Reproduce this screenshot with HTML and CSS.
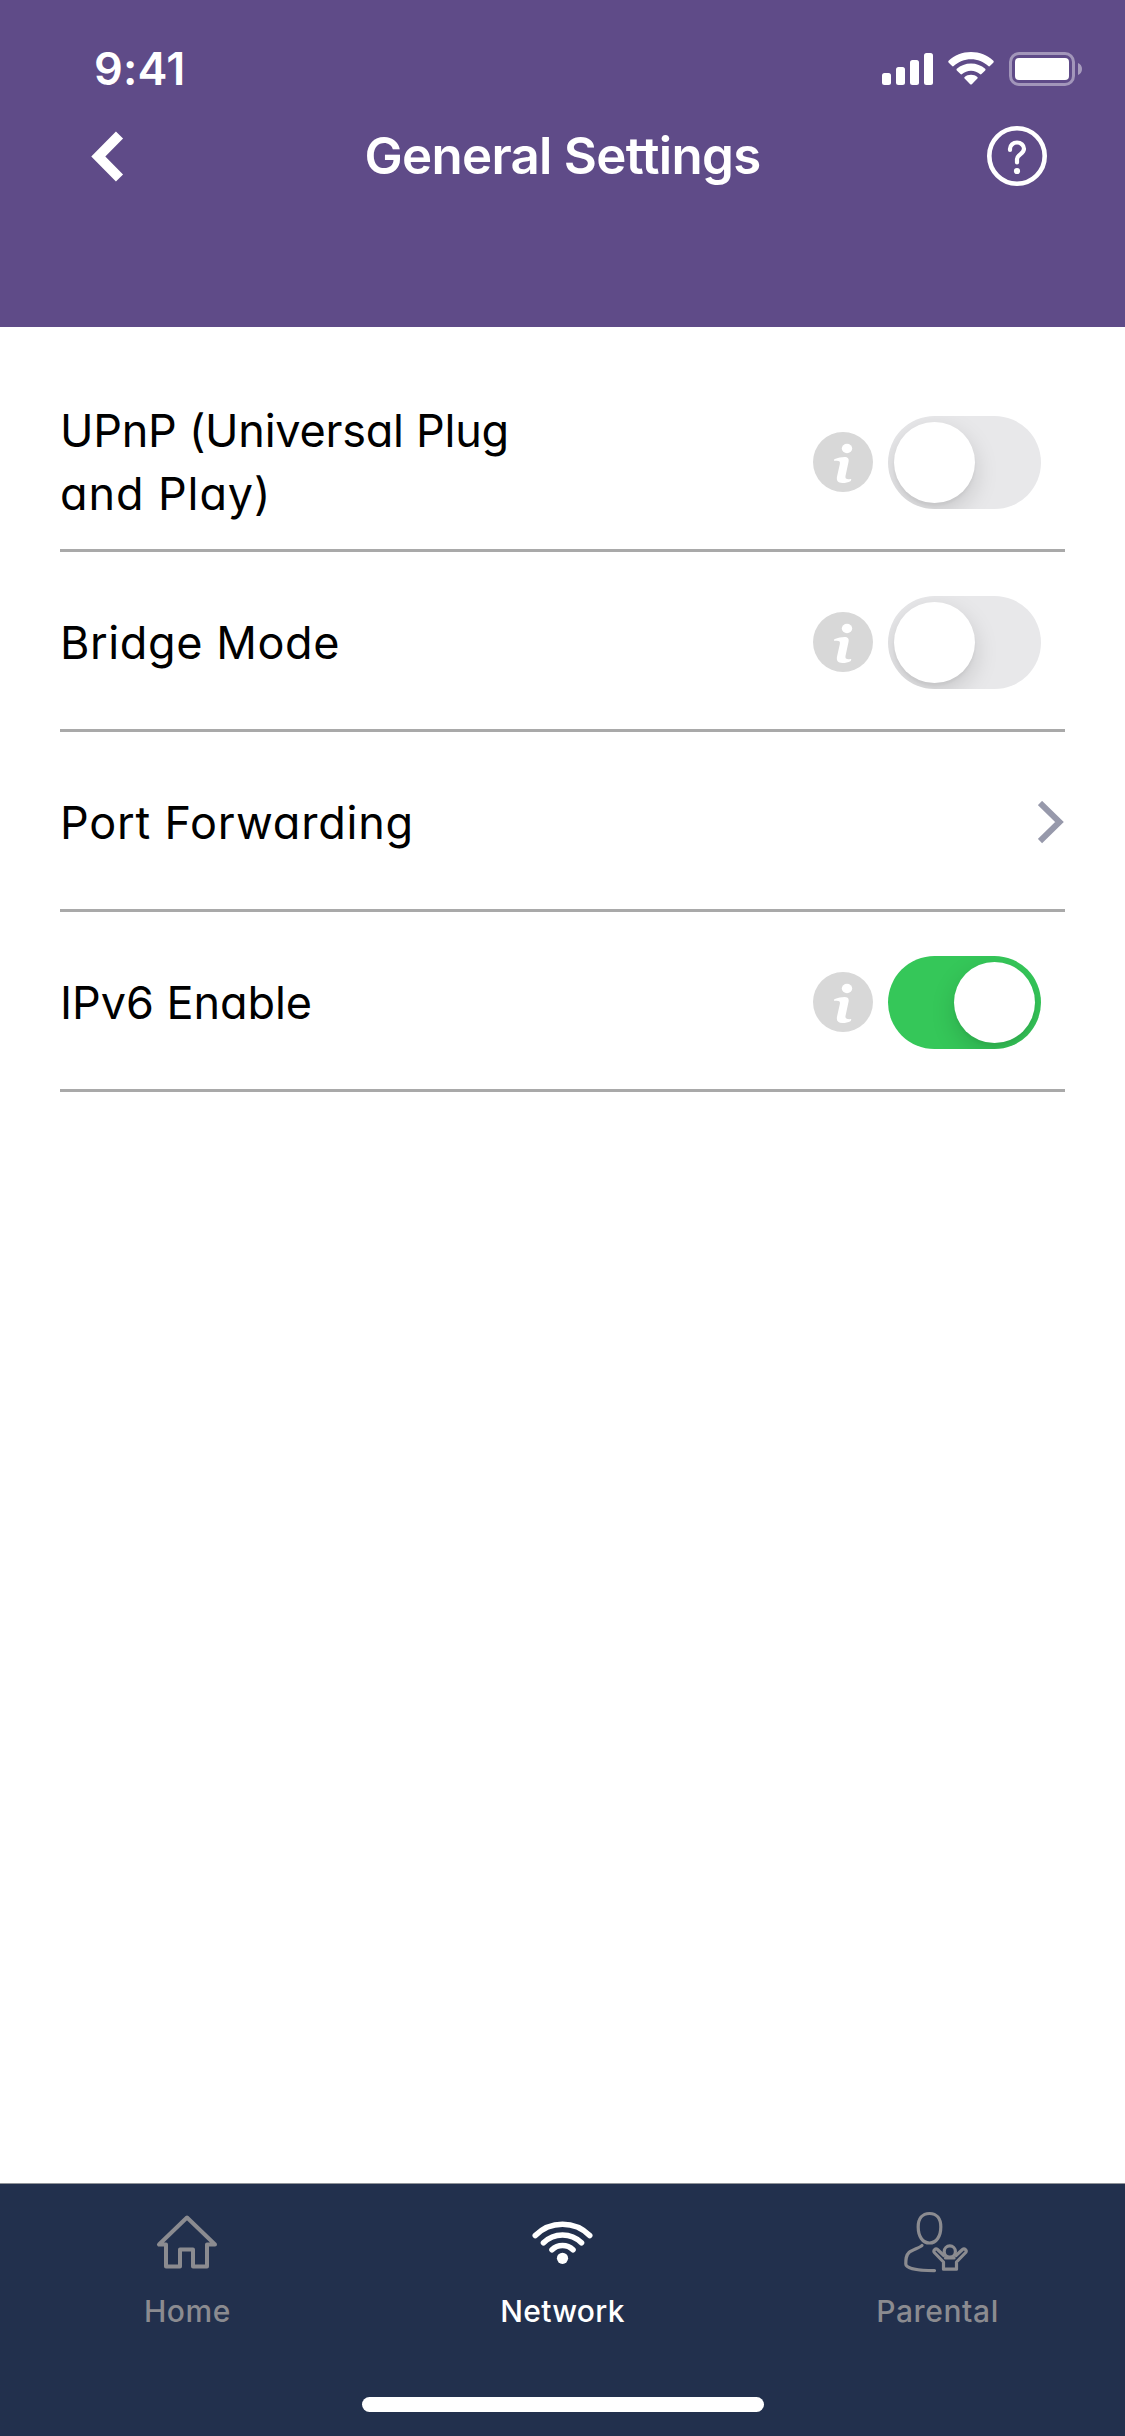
FILE: index.html
```html
<!DOCTYPE html>
<html lang="en">
<head>
<meta charset="utf-8">
<title>General Settings</title>
<link rel="stylesheet" href="styles.css">
</head>
<body>
<svg class="defs" width="0" height="0" aria-hidden="true">
  <symbol id="info" viewBox="0 0 60 60">
    <circle cx="30" cy="30" r="30" fill="#d8d8d8"/>
    <ellipse cx="34" cy="16.500" rx="5.200" ry="4.700" fill="#fff"/>
    <path d="M21.200 27.300c4-1.600 7.500-2.300 10.300-2.300 3.300 0 4.800 1.500 4 5.100l-2.900 13.300c-.7 3.200.6 4 5.700 3.700l-.5 1.800C35.200 50.300 32.500 51 29.500 51c-4.700 0-6.400-2.300-5.400-6.700l2.700-12.100c.7-3-.6-3.900-5.600-3.300z" fill="#fff"/>
  </symbol>
</svg>
<div class="screen">
  <header class="header">
    <div class="status">
      <span class="time">9:41</span>
      <svg class="status-icons" width="202" height="36" viewBox="0 0 202 36">
        <g fill="#fff">
          <rect x="0" y="21" width="9" height="12" rx="2.500"/>
          <rect x="14" y="15" width="9" height="18" rx="2.500"/>
          <rect x="28" y="8" width="9" height="25" rx="2.500"/>
          <rect x="42" y="1" width="9" height="32" rx="2.500"/>
          <path d="M89 0c8.600 0 16.500 3.300 22.400 8.800.5.500.5 1.100.1 1.600l-3.600 3.600c-.5.500-1.100.5-1.600 0C101.600 9.800 95.600 7.200 89 7.200S76.400 9.800 71.700 14c-.5.500-1.100.5-1.600 0l-3.600-3.600c-.4-.5-.4-1.100.1-1.600C72.500 3.300 80.400 0 89 0z"/>
          <path d="M89 11.400c5.400 0 10.400 2 14.200 5.400.5.500.5 1.100 0 1.600l-3.700 3.700c-.5.500-1.100.5-1.600 0-2.300-2.100-5.400-3.400-8.900-3.400s-6.600 1.300-8.900 3.400c-.5.500-1.100.5-1.600 0l-3.700-3.700c-.5-.5-.5-1.100 0-1.600 3.800-3.400 8.800-5.400 14.200-5.400z"/>
          <path d="M89 22.800c2.500 0 4.700.8 6.300 2.200.5.400.5 1.100.1 1.600l-5.600 5.600c-.5.500-1.100.5-1.600 0l-5.600-5.600c-.4-.5-.4-1.200.1-1.600 1.600-1.400 3.800-2.200 6.300-2.200z"/>
          <rect x="133" y="6" width="54" height="22" rx="4"/>
          <path d="M196 11v12c2.500-1 4-3.300 4-6s-1.500-5-4-6z" opacity=".45"/>
        </g>
        <rect x="128.500" y="1.500" width="63" height="31" rx="8.500" fill="none" stroke="#fff" stroke-width="3" opacity=".42"/>
      </svg>
    </div>
    <div class="nav">
      <svg class="back" width="34" height="52" viewBox="0 0 34 52"><path d="M29.500 5 8.300 26.500 29.500 48" fill="none" stroke="#fff" stroke-width="10"/></svg>
      <h1 class="title">General Settings</h1>
      <svg class="help" width="60" height="60" viewBox="0 0 60 60" fill="none" stroke="#fff">
        <circle cx="30" cy="30" r="27.700" stroke-width="4.600"/>
        <path d="M23 24v-1.200a7 6.300 0 0 1 14 0c0 5.200-7 5.700-7 10.200v3.500" stroke-width="4.200" stroke-linecap="round"/>
        <circle cx="30" cy="45" r="3.100" fill="#fff" stroke="none"/>
      </svg>
    </div>
  </header>

  <main class="settings">
    <div class="row row-first">
      <span class="label upnp">UPnP (Universal Plug<br><span class="second">and Play)</span></span>
      <div class="controls"><svg class="info"><use href="#info"/></svg><span class="toggle"><span class="knob"></span></span></div>
    </div>
    <div class="row">
      <span class="label bridge">Bridge Mode</span>
      <div class="controls"><svg class="info"><use href="#info"/></svg><span class="toggle"><span class="knob"></span></span></div>
    </div>
    <div class="row">
      <span class="label port">Port Forwarding</span>
      <svg class="chevron" width="27" height="44" viewBox="0 0 27 44"><path d="M2 2 21.500 21 2 40" fill="none" stroke="#9799ab" stroke-width="6"/></svg>
    </div>
    <div class="row">
      <span class="label ipv6">IPv6 Enable</span>
      <div class="controls"><svg class="info"><use href="#info"/></svg><span class="toggle on"><span class="knob"></span></span></div>
    </div>
  </main>

  <footer class="tabbar">
    <nav class="tabs">
      <div class="tab">
        <svg width="64" height="64" viewBox="1 0 64 64" fill="none" stroke="currentColor" stroke-width="4" stroke-linejoin="round"><path d="M32 6.500 4 33.500h7v22h14v-17h13v17h14v-22h8z"/></svg>
        <span class="tab-label home">Home</span>
      </div>
      <div class="tab active">
        <svg width="64" height="64" viewBox="0.500 1 64 64" fill="none" stroke="currentColor" stroke-width="5.600" stroke-linecap="round"><path d="M4.800 25.500a38.500 38.500 0 0 1 54.400 0M13 32.800a27 27 0 0 1 38 0M21.500 39.800a15 15 0 0 1 21 0"/><circle cx="32" cy="48.300" r="5.600" fill="currentColor" stroke="none"/></svg>
        <span class="tab-label network">Network</span>
      </div>
      <div class="tab">
        <svg class="family" width="64" height="64" viewBox="-1 0 64 64" fill="none" stroke="currentColor" stroke-width="3.200" stroke-linejoin="round" stroke-linecap="round"><path d="M24.500 2.500c7.300 0 11.300 5.200 11.300 13.500 0 9.300-4.400 16-11.300 16s-11.300-6.700-11.300-16C13.200 7.700 17.200 2.500 24.500 2.500z"/><path d="M17 34.500c-2 2.200-9.500 4.200-13 7C.8 44.500.8 48.200.8 53c0 4.500 12.700 6.600 28.700 6.600"/><circle cx="44.800" cy="40.500" r="5.600"/><path d="M38.800 44.500 32.500 38.500c-2-1.800-4.500 1-3.200 3L38.500 51v7.200h13V51l9.200-9.500c1.500-2-1.100-4.800-3.200-3L51 44.500"/><path d="M40.500 47h8.600"/></svg>
        <span class="tab-label parental">Parental</span>
      </div>
    </nav>
    <div class="home-indicator"></div>
  </footer>
</div>
</body>
</html>
```
FILE: styles.css
```css
* { box-sizing: border-box; }

body {
  margin: 0;
  background: #fff;
  font-family: Inter, "Liberation Sans", sans-serif;
}

.defs { position: absolute; }
svg { display: block; flex: none; }

.screen {
  width: 1125px;
  height: 2436px;
  display: flex;
  flex-direction: column;
}

.header {
  height: 327px;
  background: #5f4b88;
  color: #fff;
}

.status {
  height: 108px;
  padding: 42px 41px 0 94px;
  display: flex;
  justify-content: space-between;
}

.time {
  font-size: 45px;
  line-height: 54px;
  font-weight: 560;
  letter-spacing: 0.2px;
}

.status-icons { margin-top: 10px; }

.nav {
  height: 96px;
  padding: 0 78px 0 90px;
  display: grid;
  grid-template-columns: 60px 1fr 60px;
  align-items: center;
}

.title {
  margin: 0;
  padding-right: 12px;
  text-align: center;
  font-size: 51px;
  line-height: 60px;
  font-weight: 570;
  letter-spacing: -0.7px;
}

.settings {
  flex: 1;
  padding: 0 60px;
}

.row {
  height: 180px;
  padding-top: 4px;
  border-bottom: 3px solid #a9a9a9;
  display: flex;
  align-items: center;
  justify-content: space-between;
}

.row-first {
  height: 225px;
  padding-top: 49px;
}

.label {
  color: #000;
  font-size: 45px;
  line-height: 63px;
  font-feature-settings: "cv11";
  white-space: nowrap;
}

.upnp { letter-spacing: -0.25px; margin-top: -2px; }
.second { letter-spacing: 0.9px; }
.bridge { letter-spacing: 0.6px; }
.port { letter-spacing: 0.8px; }
.ipv6 { letter-spacing: -0.05px; }

.controls {
  display: flex;
  align-items: center;
  gap: 15px;
  padding-right: 24px;
}

.info {
  width: 60px;
  height: 60px;
  margin-bottom: 1px;
}

.toggle {
  width: 153px;
  height: 93px;
  padding: 6px;
  border-radius: 47px;
  background: #e8e8ea;
  display: flex;
  overflow: hidden;
}

.toggle.on {
  background: #35c759;
  justify-content: flex-end;
}

.knob {
  width: 81px;
  height: 81px;
  border-radius: 50%;
  background: #fff;
  box-shadow: 0 9px 24px rgba(0, 0, 0, .15), 0 3px 3px rgba(0, 0, 0, .04);
}

.tabbar {
  height: 253px;
  border-top: 1px solid #8f9399;
  background: #22304d;
  display: flex;
  flex-direction: column;
}

.tabs {
  height: 213px;
  display: grid;
  grid-template-columns: repeat(3, 1fr);
}

.tab {
  padding-top: 27px;
  display: flex;
  flex-direction: column;
  align-items: center;
  color: #8b8b90;
}

.tab.active { color: #fff; }

.family { margin-right: 4px; }

.tab-label {
  margin-top: 18px;
  font-size: 30px;
  line-height: 36px;
  font-weight: 480;
  letter-spacing: 0.6px;
}

.network { letter-spacing: 0.3px; }

.home-indicator {
  width: 402px;
  height: 15px;
  margin: 0 auto;
  border-radius: 8px;
  background: #fff;
}
```
